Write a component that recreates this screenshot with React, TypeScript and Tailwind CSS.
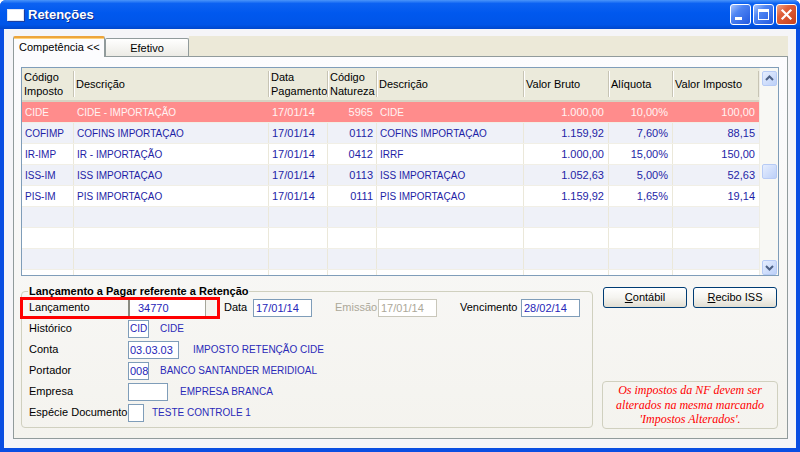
import React from 'react';

type Row = {
  cod: string;
  desc: string;
  data: string;
  nat: string;
  desc2: string;
  bruto: string;
  aliq: string;
  imposto: string;
};

const rows: Row[] = [
  { cod: 'CIDE', desc: 'CIDE - IMPORTAÇÃO', data: '17/01/14', nat: '5965', desc2: 'CIDE', bruto: '1.000,00', aliq: '10,00%', imposto: '100,00' },
  { cod: 'COFIMP', desc: 'COFINS IMPORTAÇAO', data: '17/01/14', nat: '0112', desc2: 'COFINS IMPORTAÇAO', bruto: '1.159,92', aliq: '7,60%', imposto: '88,15' },
  { cod: 'IR-IMP', desc: 'IR - IMPORTAÇÃO', data: '17/01/14', nat: '0412', desc2: 'IRRF', bruto: '1.000,00', aliq: '15,00%', imposto: '150,00' },
  { cod: 'ISS-IM', desc: 'ISS IMPORTAÇAO', data: '17/01/14', nat: '0113', desc2: 'ISS IMPORTAÇAO', bruto: '1.052,63', aliq: '5,00%', imposto: '52,63' },
  { cod: 'PIS-IM', desc: 'PIS IMPORTAÇAO', data: '17/01/14', nat: '0111', desc2: 'PIS IMPORTAÇAO', bruto: '1.159,92', aliq: '1,65%', imposto: '19,14' },
];

// header columns, widths add up to 737px
const cols = [
  { w: 'w-[52px]', label: ['Código', 'Imposto'] },
  { w: 'w-[195px]', label: ['Descrição'] },
  { w: 'w-[59px]', label: ['Data', 'Pagamento'] },
  { w: 'w-[49px]', label: ['Código', 'Natureza'] },
  { w: 'w-[147px]', label: ['Descrição'] },
  { w: 'w-[85px]', label: ['Valor Bruto'] },
  { w: 'w-[64px]', label: ['Alíquota'] },
  { w: 'w-[86px]', label: ['Valor Imposto'] },
];

const TitleButton: React.FC<{ kind: 'min' | 'max' | 'close' }> = ({ kind }) => {
  const bg =
    kind === 'close'
      ? 'bg-[linear-gradient(135deg,#f0a58a_0%,#e0603a_35%,#c7401c_100%)]'
      : 'bg-[linear-gradient(135deg,#a9c6fd_0%,#4f85f3_35%,#2159e0_100%)]';
  return (
    <div className={`w-[21px] h-[21px] rounded-[3px] border border-white ${bg} flex items-center justify-center`}>
      <svg width="19" height="19" viewBox="0 0 19 19">
        {kind === 'min' && <rect x="4" y="12" width="7" height="3" fill="#fff" />}
        {kind === 'max' && (
          <g fill="none" stroke="#fff">
            <rect x="4.5" y="4.5" width="10" height="10" strokeWidth="1" />
            <rect x="4" y="4" width="11" height="3" fill="#fff" stroke="none" />
          </g>
        )}
        {kind === 'close' && (
          <g stroke="#fff" strokeWidth="2.2" strokeLinecap="square">
            <line x1="5.5" y1="5.5" x2="13.5" y2="13.5" />
            <line x1="13.5" y1="5.5" x2="5.5" y2="13.5" />
          </g>
        )}
      </svg>
    </div>
  );
};

const ScrollButton: React.FC<{ dir: 'up' | 'down' }> = ({ dir }) => (
  <div className="w-[15px] h-[15px] rounded-[2px] border border-[#b7cbf5] bg-linear-to-br from-[#e6eefe] to-[#bcd0f8] flex items-center justify-center">
    <svg width="11" height="11" viewBox="0 0 11 11">
      <polyline
        points={dir === 'up' ? '2,7 5.5,3.5 9,7' : '2,4 5.5,7.5 9,4'}
        fill="none"
        stroke="#4d6185"
        strokeWidth="2"
      />
    </svg>
  </div>
);

const Box: React.FC<{ w: string; children?: React.ReactNode; className?: string }> = ({ w, children, className = '' }) => (
  <div className={`${w} h-[18px] border border-[#7f9db9] bg-white px-[1px] leading-[16px] text-[#2626b8] whitespace-nowrap overflow-hidden ${className}`}>
    {children}
  </div>
);

const Grid: React.FC = () => {
  const body = Array.from({ length: 9 }, (_, i) => rows[i]);
  return (
    <div className="w-[758px] h-[209px] border border-[#7f9db9] bg-white flex overflow-hidden">
      <div className="w-[737px] flex flex-col">
        {/* header */}
        <div className="h-[34px] shrink-0 flex bg-[#ebeadb] border-b-[2px] border-[#d6d2c2] text-black">
          {cols.map((c, i) => (
            <div key={i} className={`${c.w} shrink-0 flex items-center`}>
              <div className="flex-1 min-w-0 pl-[2px] leading-[14px] whitespace-nowrap">
                {c.label.map((l) => (
                  <div key={l}>{l}</div>
                ))}
              </div>
              <div className="w-px h-[26px] bg-[#c7c4b4] shadow-[1px_0_0_#ffffff]" />
            </div>
          ))}
        </div>
        {/* body */}
        {body.map((r, i) => {
          const selected = i === 0;
          const rowBg = selected ? 'bg-[#ff8c8c]' : i % 2 === 1 ? 'bg-[#eff1f8]' : 'bg-white';
          const txt = selected ? 'text-[#fff3f3]' : 'text-[#1e1ea6]';
          const line = selected ? 'border-[#ff8c8c]' : 'border-[#ebe8da]';
          return (
            <div key={i} className={`h-[21px] shrink-0 flex ${rowBg} ${txt} border-b border-[#f1efe6] leading-[21px] whitespace-nowrap`}>
              <div className={`w-[52px] shrink-0 border-r ${line} pl-[3px] text-[10px]`}>{r?.cod}</div>
              <div className={`w-[195px] shrink-0 border-r ${line} pl-[3px] text-[10px]`}>{r?.desc}</div>
              <div className={`w-[59px] shrink-0 border-r ${line} pl-[3px]`}>{r?.data}</div>
              <div className={`w-[49px] shrink-0 border-r ${line} pr-[3px] text-right`}>{r?.nat}</div>
              <div className={`w-[147px] shrink-0 border-r ${line} pl-[3px] text-[10px]`}>{r?.desc2}</div>
              <div className={`w-[85px] shrink-0 border-r ${line} pr-[4px] text-right`}>{r?.bruto}</div>
              <div className={`w-[64px] shrink-0 border-r ${line} pr-[4px] text-right`}>{r?.aliq}</div>
              <div className={`w-[86px] shrink-0 pr-[4px] text-right`}>{r?.imposto}</div>
            </div>
          );
        })}
      </div>
      {/* scrollbar */}
      <div className="w-[19px] bg-[#f8f8f4] border-l border-[#eeede5] flex flex-col items-center pt-[3px]">
        <ScrollButton dir="up" />
        <div className="mt-[78px] w-[15px] h-[15px] rounded-[2px] border border-[#b7cbf5] bg-linear-to-br from-[#e6eefe] to-[#bcd0f8]" />
        <div className="mt-auto">
          <ScrollButton dir="down" />
        </div>
      </div>
    </div>
  );
};

const FieldRow: React.FC<{ label: string; children: React.ReactNode }> = ({ label, children }) => (
  <div className="h-[21px] flex items-center pl-[7px]">
    <div className="w-[99px] shrink-0 text-black">{label}</div>
    {children}
  </div>
);

const Caption: React.FC<{ ml: string; children: React.ReactNode }> = ({ ml, children }) => (
  <div className={`${ml} text-[10px] text-[#2a2ab8] whitespace-nowrap`}>{children}</div>
);

export default function App() {
  return (
    <div className="w-[800px] h-[452px] flex flex-col bg-[#0a4ee2] rounded-t-[6px] overflow-hidden font-['Liberation_Sans',Arial,sans-serif] text-[11px]">
      {/* title bar */}
      <div className="h-[29px] shrink-0 flex items-center bg-[linear-gradient(to_bottom,#4a95fa_0%,#0c62f2_12%,#0058ee_45%,#0055e8_85%,#0047cc_100%)] pl-[7px] pr-[3px]">
        <div className="w-[17px] h-[12px] bg-white border border-[#dfe6f5] shadow-[1px_1px_0_#1d3fa0]" />
        <div className="ml-[4px] text-white font-bold text-[13px] [text-shadow:1px_1px_0_#0c2a8c]">Retenções</div>
        <div className="ml-auto flex gap-[2px]">
          <TitleButton kind="min" />
          <TitleButton kind="max" />
          <TitleButton kind="close" />
        </div>
      </div>

      {/* client area */}
      <div className="flex-1 mx-[4px] mb-[4px] bg-[#f5f5f8] flex flex-col pt-[7px] pb-[9px]">
        {/* tabs */}
        <div className="h-[20px] shrink-0 flex items-end ml-[9px] mr-[8px]">
          <div className="relative z-10 -mb-px w-[92px] h-[21px] bg-[#fcfcfe] border border-[#919b9c] border-b-0 border-t-2 border-t-[#eda53c] rounded-t-[2px] shadow-[inset_0_1px_0_#ffd27a] pl-[5px] leading-[18px] text-black">
            Competência &lt;&lt;
          </div>
          <div className="w-[84px] h-[18px] bg-linear-to-b from-white to-[#ecebe5] border border-[#919b9c] border-b-0 rounded-t-[2px] text-center leading-[18px] text-black">
            Efetivo
          </div>
          <div className="flex-1 h-[20px] bg-[#ece9d8]" />
        </div>

        {/* tab page */}
        <div className="flex-1 ml-[9px] mr-[8px] border border-[#919b9c] bg-linear-to-b from-[#fcfcfe] to-[#f4f3ee] pt-[10px] pl-[7px] pr-[8px]">
          <Grid />

          <div className="mt-[10px] flex gap-[9px]">
            {/* group box */}
            <fieldset className="w-[572px] h-[142px] border border-[#d0d0bf] rounded-[4px] min-w-0">
              <legend className="ml-[6px] px-[1px] font-bold leading-[11px] text-black">
                Lançamento a Pagar referente a Retenção
              </legend>
              <div className="h-[21px] flex items-center">
                <div className="-ml-[2px] w-[200px] h-[22px] shrink-0 border-[3px] border-[#ff0000] flex items-center pl-[6px]">
                  <div className="w-[99px] shrink-0 text-black">Lançamento</div>
                  <div className="flex h-[16px] border-l-2 border-[#8a8a80] bg-white">
                    <div className="w-[75px] pl-[8px] leading-[16px] text-[#2626b8]">34770</div>
                    <div className="w-[10px] border-l border-[#a6a69a] bg-[#f4f3ee]" />
                  </div>
                </div>
                <div className="ml-[4px] w-[29px] text-black">Data</div>
                <Box w="w-[59px]" className="pl-[2px]">17/01/14</Box>
                <div className="ml-[23px] w-[43px] text-[#aca899]">Emissão</div>
                <Box w="w-[59px]" className="pl-[2px] bg-[#ece9d8] border-[#c9c7ba] text-[#aca899]">17/01/14</Box>
                <div className="ml-[23px] w-[61px] text-black">Vencimento</div>
                <Box w="w-[59px]" className="pl-[2px]">28/02/14</Box>
              </div>
              <FieldRow label="Histórico">
                <Box w="w-[21px]" className="text-[10px]">CID</Box>
                <Caption ml="ml-[11px]">CIDE</Caption>
              </FieldRow>
              <FieldRow label="Conta">
                <Box w="w-[51px]">03.03.03</Box>
                <Caption ml="ml-[14px]">IMPOSTO RETENÇÃO CIDE</Caption>
              </FieldRow>
              <FieldRow label="Portador">
                <Box w="w-[21px]">008</Box>
                <Caption ml="ml-[11px]">BANCO SANTANDER MERIDIOAL</Caption>
              </FieldRow>
              <FieldRow label="Empresa">
                <Box w="w-[40px]" />
                <Caption ml="ml-[12px]">EMPRESA BRANCA</Caption>
              </FieldRow>
              <FieldRow label="Espécie Documento">
                <Box w="w-[16px]" />
                <Caption ml="ml-[8px]">TESTE CONTROLE 1</Caption>
              </FieldRow>
            </fieldset>

            {/* right column */}
            <div className="w-[176px] h-[143px] flex flex-col">
              <div className="mt-[1px] pl-[1px] flex gap-[6px]">
                <button className="w-[84px] h-[21px] rounded-[3px] border border-[#003c74] bg-linear-to-b from-white via-[#f5f4f0] to-[#e1ded2] text-black">
                  <span className="underline">C</span>ontábil
                </button>
                <button className="w-[84px] h-[21px] rounded-[3px] border border-[#003c74] bg-linear-to-b from-white via-[#f5f4f0] to-[#e1ded2] text-black">
                  <span className="underline">R</span>ecibo ISS
                </button>
              </div>
              <div className="mt-auto h-[48px] border border-[#d0d0bf] rounded-[4px] flex flex-col items-center justify-center text-[#ff0000] italic font-['Liberation_Serif',serif] text-[12px] leading-[14.5px]">
                <div>Os impostos da NF devem ser</div>
                <div>alterados na mesma marcando</div>
                <div>'Impostos Alterados'.</div>
              </div>
            </div>
          </div>
        </div>
      </div>
    </div>
  );
}
